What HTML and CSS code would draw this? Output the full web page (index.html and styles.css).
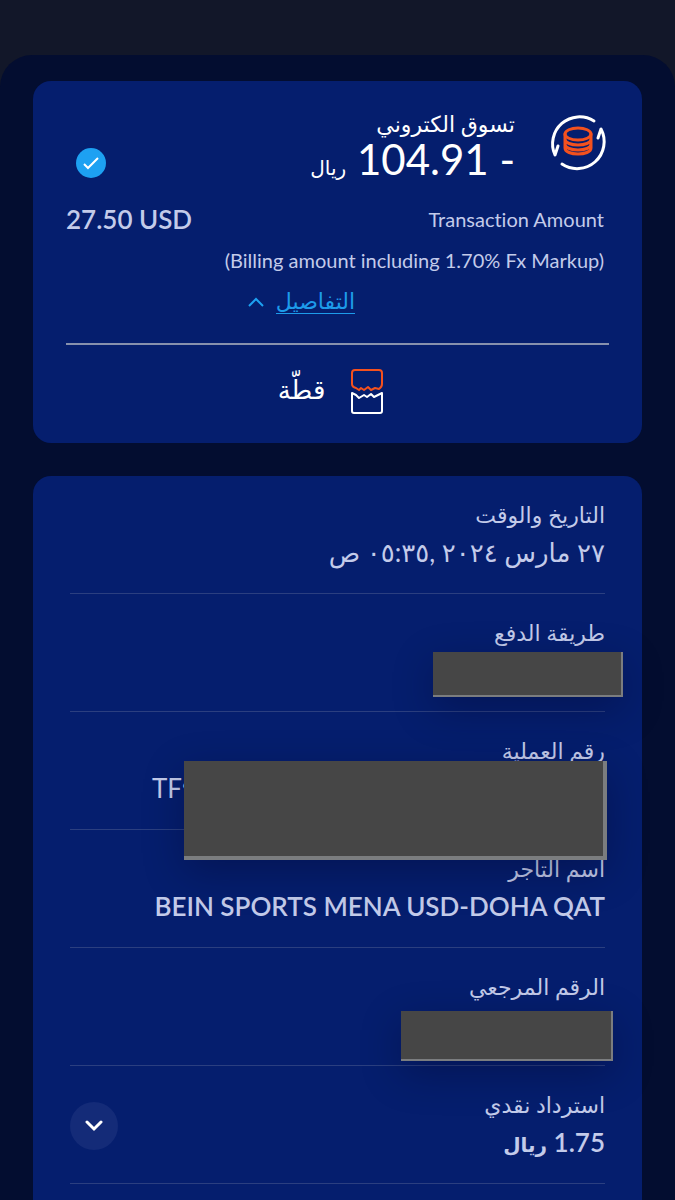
FILE: index.html
```html
<!DOCTYPE html>
<html lang="ar" dir="rtl">
	<head>
		<meta charset="utf-8">
		<meta name="viewport" content="width=device-width, initial-scale=1">
		<title>تسوق الكتروني</title>
		<link rel="stylesheet" href="styles.css">
	</head>
	<body>
		<main class="sheet">
			<section class="card summary">
				<div class="head">
					<svg class="coins" viewBox="0 0 58 58" fill="none" stroke-linecap="round" stroke-linejoin="round">
						<g stroke="#fff" stroke-width="3">
							<path d="M45 8A27 27 0 0 0 6 42L9 33"/>
							<path d="M13 51A27 27 0 0 0 52 16L49 25"/>
						</g>
						<g stroke="#f4511e" stroke-width="3">
							<ellipse cx="29" cy="21" rx="13" ry="6"/>
							<path d="M16 21V35C16 43 42 43 42 35V21M16 26C16 34 42 34 42 26M16 31C16 39 42 39 42 31"/>
						</g>
					</svg>
					<div class="title">
						<h1>تسوق الكتروني</h1>
						<p class="amount">- 104.91 <small>ريال</small></p>
					</div>
					<svg class="check" viewBox="0 0 30 30">
						<circle cx="15" cy="15" r="15" fill="#1da1f2"/>
						<path d="M8 16L12 20L22 10" fill="none" stroke="#fff" stroke-width="2"/>
					</svg>
				</div>
				<div class="line">
					<span dir="ltr">Transaction Amount</span>
					<b dir="ltr">27.50 USD</b>
				</div>
				<p class="note"><bdi dir="ltr">(Billing amount including 1.70% Fx Markup)</bdi></p>
				<div class="more">
					<a href="#details">التفاصيل</a>
					<svg class="up" viewBox="0 0 16 10"><path d="M1 9L8 2L15 9" fill="none" stroke="#1da1f2" stroke-width="2"/></svg>
				</div>
				<button type="button" class="split">
					<svg viewBox="0 0 32 46" fill="none" stroke-width="2" stroke-linejoin="round">
						<path stroke="#f4511e" d="M5 19Q1 18 1 15V4Q1 1 4 1H28Q31 1 31 4V15Q31 18 28 20L24 19L20 21L17 18L13 21L10 19L8 21Z"/>
						<path stroke="#fff" d="M1 24L5 26L8 29L13 26L16 28L20 25L23 28L27 26L31 24V42Q31 44 29 44H3Q1 44 1 42Z"/>
					</svg>
					<span>قطّة</span>
				</button>
			</section>

			<dl class="card details" id="details">
				<div class="row">
					<dt>التاريخ والوقت</dt>
					<dd>٢٧ مارس ٢٠٢٤ ,٠٥:٣٥ ص</dd>
				</div>
				<div class="row">
					<dt>طريقة الدفع</dt>
					<dd><span class="mask mask-pay"></span></dd>
				</div>
				<div class="row">
					<dt>رقم العملية</dt>
					<dd class="number" dir="ltr">TF٩<span class="mask mask-number"></span></dd>
				</div>
				<div class="row">
					<dt>اسم التاجر</dt>
					<dd><b dir="ltr">BEIN SPORTS MENA USD-DOHA QAT</b></dd>
				</div>
				<div class="row">
					<dt>الرقم المرجعي</dt>
					<dd><span class="mask mask-ref"></span></dd>
				</div>
				<div class="row">
					<dt>استرداد نقدي</dt>
					<dd class="cashback">
						<b>1.75 <small>ريال</small></b>
						<button type="button" class="expand" aria-label="استرداد نقدي">
							<svg viewBox="0 0 18 12"><path d="M2 2L9 9L16 2" fill="none" stroke="#fff" stroke-width="3" stroke-linecap="round"/></svg>
						</button>
					</dd>
				</div>
			</dl>
		</main>
	</body>
</html>
```
FILE: styles.css
```css
* {
	box-sizing: border-box;
}

body {
	margin: 0;
	padding-top: 55px;
	background: #121729;
	color: #fff;
	font-family: Lato, "DejaVu Sans", sans-serif;
	font-variant-ligatures: no-common-ligatures;
}

h1, p, dl, dd {
	margin: 0;
}

svg {
	display: block;
	flex: none;
}

small {
	font-size: 20px;
}

.sheet {
	padding: 26px 33px 0;
	background: #030d30;
	border-radius: 32px 32px 0 0;
}

.card {
	background: #051e6e;
	border-radius: 18px;
}

/* top card */
.summary {
	padding: 28px 33px 24px;
	margin-bottom: 33px;
}

.head {
	display: flex;
	align-items: flex-start;
	padding: 4px 2px 0 10px;
}

.coins {
	width: 58px;
	height: 58px;
}

.title {
	flex: 1;
	padding-right: 34px;
}

h1 {
	font-size: 22px;
	font-weight: 400;
	line-height: 22px;
}

.amount {
	padding-top: 2px;
	font-size: 42px;
	line-height: 44px;
}

.check {
	width: 30px;
	height: 30px;
	margin-top: 35px;
}

.line {
	display: flex;
	justify-content: space-between;
	align-items: center;
	padding-right: 5px;
	margin-top: 10px;
	color: #c3cbea;
	font-size: 20px;
	line-height: 40px;
}

.line b,
dd b {
	font-size: 26px;
	font-weight: 600;
}

.note {
	padding-right: 5px;
	color: #c3cbea;
	font-size: 20px;
	line-height: 42px;
}

.more {
	display: flex;
	align-items: center;
	justify-content: center;
	gap: 12px;
	height: 41px;
	margin-right: 72px;
}

.more a {
	color: #1d9bea;
	font-size: 22px;
	line-height: 24px;
	text-decoration: none;
	border-bottom: 1px solid #1d9bea;
}

.up {
	width: 16px;
	height: 10px;
}

.split {
	display: flex;
	align-items: center;
	justify-content: center;
	gap: 26px;
	width: 100%;
	padding: 24px 14px 4px 0;
	margin-top: 21px;
	background: none;
	border: 0;
	border-top: 2px solid #8791ad;
	color: #fff;
	font: inherit;
	font-size: 26px;
	line-height: 40px;
}

.split svg {
	width: 32px;
	height: 46px;
}

.split span {
	padding-bottom: 6px;
}

/* detail rows */
.details {
	padding: 0 37px 20px;
	border-radius: 18px 18px 0 0;
}

.row {
	position: relative;
	height: 118px;
	padding-top: 24px;
	border-bottom: 1px solid #2b3f80;
	color: #c3cbea;
}

dt {
	font-size: 22px;
	line-height: 30px;
}

dd {
	font-size: 26px;
	line-height: 45px;
}

.number {
	padding-left: 82px;
}

.cashback {
	display: flex;
	justify-content: space-between;
}

.expand {
	display: flex;
	align-items: center;
	justify-content: center;
	width: 48px;
	height: 48px;
	margin-top: -18px;
	padding: 0;
	background: #142b78;
	border: 0;
	border-radius: 50%;
}

.expand svg {
	width: 18px;
	height: 12px;
}

/* grey covers over private values */
.mask {
	position: absolute;
	z-index: 1;
	background: #464646;
	border: solid #7b7d7f;
	border-width: 0 2px 2px 0;
	box-shadow: 0 12px 40px rgba(0, 0, 30, 0.3);
}

.mask-pay {
	top: 58px;
	right: -18px;
	width: 190px;
	height: 45px;
}

.mask-number {
	top: 49px;
	right: -2px;
	width: 423px;
	height: 99px;
	border-width: 0 4px 4px 0;
}

.mask-ref {
	top: 63px;
	right: -8px;
	width: 212px;
	height: 50px;
}
```
